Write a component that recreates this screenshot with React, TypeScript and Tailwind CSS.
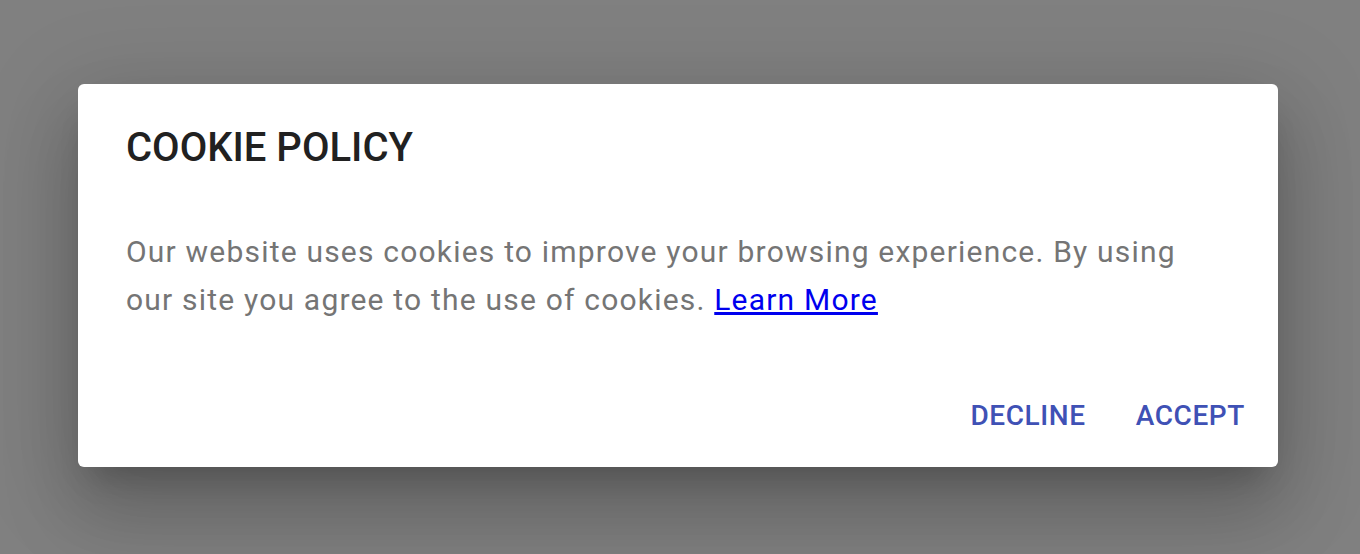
import React from 'react';

const CookieDialog: React.FC = () => (
    <div className="w-[1200px] h-[383px] bg-white rounded-[6px] flex flex-col shadow-[0_22px_30px_-14px_rgba(0,0,0,0.2),0_48px_76px_6px_rgba(0,0,0,0.14),0_18px_92px_16px_rgba(0,0,0,0.12)]">
        <h2 className="pt-[44px] pl-[48px] text-[40px] leading-[40px] font-medium text-[#212121]">COOKIE POLICY</h2>
        <p className="mt-[60px] pl-[48px] pr-[48px] text-[30px] leading-[48px] tracking-[1.2px] text-[#757575]">
            Our website uses cookies to improve your browsing experience. By using our site you agree to the use of cookies.{' '}
            <a href="#" className="text-[#0000ee] underline">Learn More</a>
        </p>
        <div className="mt-auto pb-[37px] pr-[33px] flex justify-end gap-[50px]">
            <button className="text-[28px] leading-[28px] font-medium tracking-[0.6px] text-[#3f51b5]">DECLINE</button>
            <button className="text-[28px] leading-[28px] font-medium tracking-[0.6px] text-[#3f51b5]">ACCEPT</button>
        </div>
    </div>
);

export default function App() {
    return (
        <div className="w-[1360px] h-[554px] bg-[#808080] pt-[84px] pl-[78px] font-['Roboto',sans-serif] overflow-hidden">
            <CookieDialog />
        </div>
    );
}
